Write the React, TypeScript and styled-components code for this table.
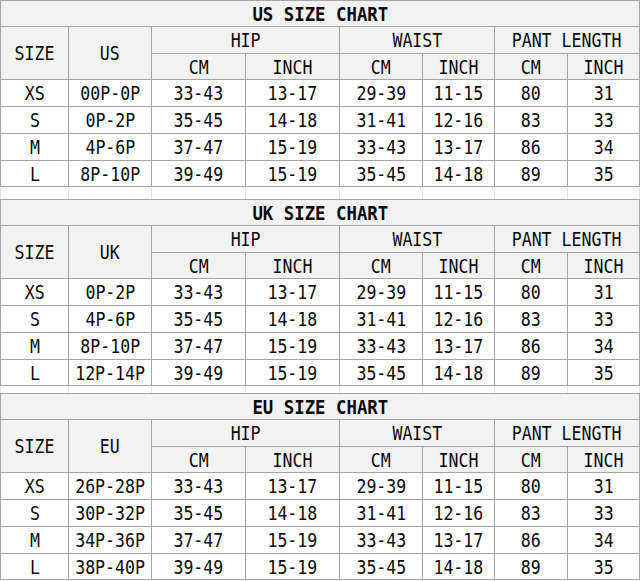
import React from "react";
import styled, { createGlobalStyle } from "styled-components";

const GlobalStyle = createGlobalStyle`
  html, body {
    margin: 0;
    padding: 0;
    background: #ffffff;
  }
  body {
    font-family: "DejaVu Sans Mono", "Liberation Mono", monospace;
    color: #000000;
  }
`;

const COLUMNS = "67px 82px 93px 93px 82px 71px 72px 71px";

const Page = styled.div`
  width: 640px;
  display: flex;
  flex-direction: column;
`;

const Chart = styled.div`
  display: grid;
  grid-template-columns: ${COLUMNS};
  grid-template-rows: 25px 26px 25px 26px 26px 26px 25px;
  gap: 1px;
  padding: 1px;
  background: #a4a4a4;
`;

const Cell = styled.div<{ $head?: boolean; $cols?: number; $rows?: number }>`
  display: flex;
  align-items: center;
  justify-content: center;
  background: ${(p) => (p.$head ? "#f2f2f2" : "#ffffff")};
  padding-top: 2px;
  box-sizing: border-box;
  overflow: hidden;
  grid-column: ${(p) => (p.$cols ? `span ${p.$cols}` : "auto")};
  grid-row: ${(p) => (p.$rows ? `span ${p.$rows}` : "auto")};
`;

const Label = styled.span<{ $bold?: boolean }>`
  display: inline-block;
  white-space: nowrap;
  line-height: 1;
  font-size: 19.5px;
  font-weight: ${(p) => (p.$bold ? 700 : 400)};
  color: #0a0a0a;
  transform: scaleX(${(p) => (p.$bold ? 0.89 : 0.85)});
  transform-origin: center;
`;

const Spacer = styled.div<{ $height: number }>`
  display: grid;
  grid-template-columns: ${COLUMNS};
  gap: 1px;
  padding: 0 1px;
  height: ${(p) => p.$height}px;
  background: #e6e6e6;
`;

const SpacerCell = styled.div`
  background: #ffffff;
`;

const shared = [
  ["33-43", "13-17", "29-39", "11-15", "80", "31"],
  ["35-45", "14-18", "31-41", "12-16", "83", "33"],
  ["37-47", "15-19", "33-43", "13-17", "86", "34"],
  ["39-49", "15-19", "35-45", "14-18", "89", "35"],
];

const sizes = ["XS", "S", "M", "L"];

const charts = [
  { region: "US", values: ["00P-0P", "0P-2P", "4P-6P", "8P-10P"] },
  { region: "UK", values: ["0P-2P", "4P-6P", "8P-10P", "12P-14P"] },
  { region: "EU", values: ["26P-28P", "30P-32P", "34P-36P", "38P-40P"] },
];

function SizeChart({ region, values }: { region: string; values: string[] }) {
  return (
    <Chart>
      <Cell $head $cols={8}>
        <Label $bold>{region} SIZE CHART</Label>
      </Cell>
      <Cell $head $rows={2}><Label>SIZE</Label></Cell>
      <Cell $head $rows={2}><Label>{region}</Label></Cell>
      <Cell $head $cols={2}><Label>HIP</Label></Cell>
      <Cell $head $cols={2}><Label>WAIST</Label></Cell>
      <Cell $head $cols={2}><Label>PANT LENGTH</Label></Cell>
      <Cell $head><Label>CM</Label></Cell>
      <Cell $head><Label>INCH</Label></Cell>
      <Cell $head><Label>CM</Label></Cell>
      <Cell $head><Label>INCH</Label></Cell>
      <Cell $head><Label>CM</Label></Cell>
      <Cell $head><Label>INCH</Label></Cell>
      {sizes.map((s, i) => (
        <React.Fragment key={s}>
          <Cell><Label>{s}</Label></Cell>
          <Cell><Label>{values[i]}</Label></Cell>
          {shared[i].map((v, j) => (
            <Cell key={j}><Label>{v}</Label></Cell>
          ))}
        </React.Fragment>
      ))}
    </Chart>
  );
}

function Gap({ height }: { height: number }) {
  return (
    <Spacer $height={height}>
      {Array.from({ length: 8 }).map((_, i) => (
        <SpacerCell key={i} />
      ))}
    </Spacer>
  );
}

export default function App() {
  return (
    <>
      <GlobalStyle />
      <Page>
        <SizeChart {...charts[0]} />
        <Gap height={12} />
        <SizeChart {...charts[1]} />
        <Gap height={7} />
        <SizeChart {...charts[2]} />
      </Page>
    </>
  );
}
